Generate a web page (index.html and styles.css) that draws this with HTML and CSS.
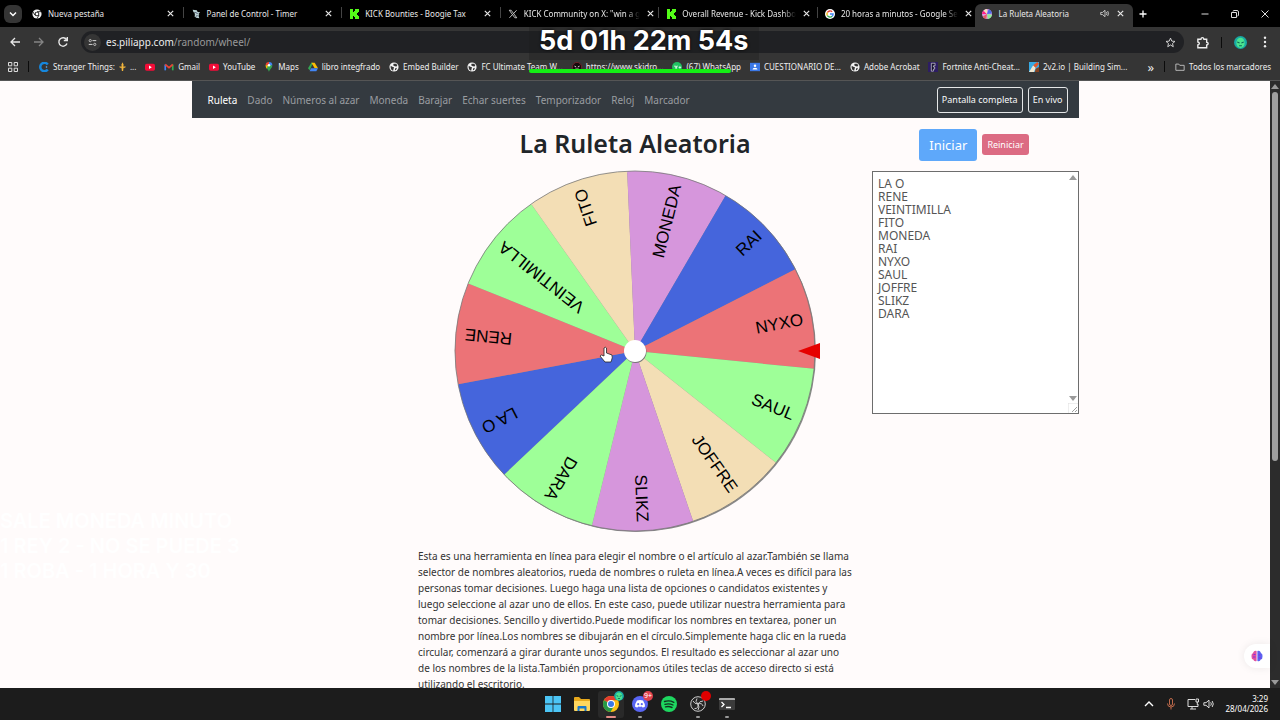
FILE: index.html
```html
<!DOCTYPE html>
<html lang="es">
<head>
    <meta charset="UTF-8">
    <meta name="viewport" content="width=device-width, initial-scale=1.0">
    <title>La Ruleta Aleatoria</title>
    <link rel="stylesheet" href="styles.css">
</head>
<body>
    <!-- shared icons -->
    <svg class="defs" aria-hidden="true">
        <symbol id="i-close" viewBox="0 0 10 10"><path d="M2 2l6 6M8 2l-6 6" fill="none" stroke="#e8e8e8" stroke-width="1.3"/></symbol>
        <symbol id="i-kick" viewBox="0 0 10 10"><path fill="#53fc18" d="M1 0h3v3h1V2h1V0h4v3H9v1H8v2h1v1h1v3H6V8H5V7H4v3H1z"/></symbol>
        <symbol id="i-globe" viewBox="0 0 12 12"><circle cx="6" cy="6" r="5.5" fill="#f4f4f4"/><path fill="#333" d="M2 4.500c1 0 1.500 1.500 3 1.500s1 1 .500 2l-.500 2.500C3 10 1.500 8 2 4.500zM5.500 2h3l1.500 2-1 1.500-2-.5-2-1zM7.500 7.500L9.500 7 8.500 9.500l-1.500.5z"/></symbol>
        <symbol id="i-youtube" viewBox="0 0 12 12"><rect x="0" y="2" width="12" height="8.500" rx="2" fill="#f20d38"/><path fill="#fff" d="M4.800 4.300v4l3.400-2z"/></symbol>
        <symbol id="i-avatar" viewBox="0 0 14 14"><circle cx="7" cy="7" r="7" fill="#18a9a4"/><ellipse cx="7" cy="7.500" rx="4.500" ry="5.500" fill="#4be38f"/><path d="M3.500 6.500l2.500 1M10.500 6.500L8 7.500M5.500 10.500h3" stroke="#0e6558" stroke-width="1.200"/></symbol>
        <symbol id="i-speaker" viewBox="0 0 14 12"><path d="M1 4.500h2.500L7 1.500v9l-3.500-3H1zM9 4q1.500 2 0 4M10.700 2.500q2.600 3.500 0 7" fill="none" stroke="#e4e4e4" stroke-width="1.100"/></symbol>
    </svg>

    <header class="browser">
        <div class="tab-strip">
            <button class="tab-search" aria-label="Buscar pestañas"><svg viewBox="0 0 10 10"><path d="M2 3.500l3 3 3-3" fill="none" stroke="#fff" stroke-width="1.500"/></svg></button>
            <div class="tabs">
                <div class="tab">
                    <svg class="icon" viewBox="0 0 12 12"><circle cx="6" cy="6" r="5.500" fill="#f3f3f3"/><circle cx="6" cy="6" r="2.800" fill="#111"/><circle cx="6" cy="6" r="1.700" fill="#fff"/><path d="M6 3.200h5M3.500 7.300L1.200 3.500M8.400 7.400L6 11.400" stroke="#111"/></svg>
                    <span class="tab-title">Nueva pestaña</span>
                    <button class="close" aria-label="Cerrar"><svg><use href="#i-close"/></svg></button>
                </div>
                <div class="tab">
                    <svg class="icon" viewBox="0 0 12 12"><path d="M2 1l5 .5 1 2 3 .5-2 2 1 1-1 1 1 3-4-.5-1-1.500H4l1-2-1-1 1-1.500-2-.5z" fill="#b9d2d4"/><path d="M5 4l3 1.500M6 8.500l2-.5" stroke="#446"/></svg>
                    <span class="tab-title">Panel de Control - Timer</span>
                    <button class="close" aria-label="Cerrar"><svg><use href="#i-close"/></svg></button>
                </div>
                <div class="tab">
                    <svg class="icon"><use href="#i-kick"/></svg>
                    <span class="tab-title">KICK Bounties - Boogie Tax</span>
                    <button class="close" aria-label="Cerrar"><svg><use href="#i-close"/></svg></button>
                </div>
                <div class="tab">
                    <svg class="icon" viewBox="0 0 12 12"><path d="M1.500 1.500h2.300l6.700 9H8.200zM10.300 1.500L6.600 5.600M5.300 6.800l-3.600 3.800" fill="none" stroke="#ddd"/></svg>
                    <span class="tab-title faded">KICK Community on X: "win a g</span>
                    <button class="close" aria-label="Cerrar"><svg><use href="#i-close"/></svg></button>
                </div>
                <div class="tab">
                    <svg class="icon"><use href="#i-kick"/></svg>
                    <span class="tab-title faded">Overall Revenue - Kick Dashbo</span>
                    <button class="close" aria-label="Cerrar"><svg><use href="#i-close"/></svg></button>
                </div>
                <div class="tab">
                    <svg class="icon" viewBox="0 0 12 12"><circle cx="6" cy="6" r="6" fill="#fff"/><g fill="none" stroke-width="1.700"><path d="M8.600 3.300A3.700 3.700 0 0 0 2.800 4.200" stroke="#ea4335"/><path d="M2.800 4.200a3.700 3.700 0 0 0 0 3.600" stroke="#fbbc05"/><path d="M2.800 7.800a3.700 3.700 0 0 0 5.800.9" stroke="#34a853"/><path d="M8.600 8.700A3.700 3.700 0 0 0 9.700 6H6" stroke="#4285f4"/></g></svg>
                    <span class="tab-title faded">20 horas a minutos - Google Se</span>
                    <button class="close" aria-label="Cerrar"><svg><use href="#i-close"/></svg></button>
                </div>
                <div class="tab active">
                    <svg class="icon" viewBox="0 0 12 12"><circle cx="6" cy="6" r="6" fill="#dc9be2"/><path fill="#f28" d="M6 6L0 6a6 6 0 0 1 2-4z"/><path fill="#4b6bea" d="M6 6l2-5.600a6 6 0 0 1 4 5z"/><path fill="#8df09a" d="M6 6l6 1a6 6 0 0 1-5 5z"/><path fill="#f5e2b8" d="M6 6L2 2a6 6 0 0 1 4-2z"/><path fill="#e45c65" d="M6 6l-1 6a6 6 0 0 1-4-3z"/></svg>
                    <span class="tab-title">La Ruleta Aleatoria</span>
                    <svg class="sound"><use href="#i-speaker"/></svg>
                    <button class="close" aria-label="Cerrar"><svg><use href="#i-close"/></svg></button>
                </div>
            </div>
            <button class="new-tab" aria-label="Nueva pestaña"><svg viewBox="0 0 10 10"><path d="M5 1.500v7M1.500 5h7" stroke="#fff" stroke-width="1.300"/></svg></button>
            <div class="window-buttons">
                <button aria-label="Minimizar"><svg viewBox="0 0 10 10"><path d="M1.500 5h7" stroke="#ddd"/></svg></button>
                <button aria-label="Restaurar"><svg viewBox="0 0 10 10"><path d="M3 2.500q0-1 1-1h3q1.500 0 1.500 1.500v3q0 1-1 1M1.500 3.500h5v5h-5z" fill="none" stroke="#ddd"/></svg></button>
                <button aria-label="Cerrar ventana"><svg viewBox="0 0 10 10"><path d="M1.500 1.500l7 7M8.500 1.500l-7 7" stroke="#ddd"/></svg></button>
            </div>
        </div>

        <div class="toolbar">
            <button aria-label="Atrás"><svg viewBox="0 0 12 12"><path d="M11 6H2M6 2L2 6l4 4" fill="none" stroke="#e8e8e8" stroke-width="1.300"/></svg></button>
            <button aria-label="Adelante"><svg viewBox="0 0 12 12"><path d="M1 6h9M6 2l4 4-4 4" fill="none" stroke="#848484" stroke-width="1.300"/></svg></button>
            <button aria-label="Recargar"><svg viewBox="0 0 12 12"><path d="M10 7.500A4.200 4.200 0 1 1 9.500 3.500M10.300 1v3.500H6.800" fill="none" stroke="#e8e8e8" stroke-width="1.400"/></svg></button>
            <div class="address">
                <span class="site-info"><svg viewBox="0 0 12 12"><path d="M6 3.500h5M1 8.500h5" stroke="#ddd" stroke-width="1.300"/><circle cx="3" cy="3.500" r="1.500" fill="none" stroke="#ddd"/><circle cx="9" cy="8.500" r="1.500" fill="none" stroke="#ddd"/></svg></span>
                <span class="url">es.piliapp.com<span class="path">/random/wheel/</span></span>
                <svg class="star" viewBox="0 0 12 12"><path d="M6 1.200l1.400 3.300 3.500.3-2.700 2.300.8 3.500-3-1.900-3 1.900.8-3.500L1.100 4.800l3.500-.3z" fill="none" stroke="#ddd"/></svg>
            </div>
            <button class="extensions" aria-label="Extensiones"><svg viewBox="0 0 14 14"><path d="M2 3.500h3.300q.2-1.800 1.600-1.800t1.600 1.800H11.500v3.200q1.600.2 1.600 1.500t-1.600 1.500v3H2V9.500q1.600-.3 1.600-1.500T2 6.500z" fill="none" stroke="#eee" stroke-width="1.500"/></svg></button>
            <span class="divider"></span>
            <button class="profile" aria-label="Perfil"><svg><use href="#i-avatar"/></svg></button>
            <button aria-label="Menú"><svg viewBox="0 0 12 12"><g fill="#eee"><circle cx="6" cy="1.800" r="1.200"/><circle cx="6" cy="6" r="1.200"/><circle cx="6" cy="10.200" r="1.200"/></g></svg></button>
        </div>

        <nav class="bookmarks">
            <svg class="icon" viewBox="0 0 10 10"><path d="M.5.500h3.300v3.300H.5zM6.200.500h3.300v3.300H6.200zM.5 6.200h3.300v3.300H.5zM6.200 6.200h3.300v3.300H6.200z" fill="none" stroke="#ddd"/></svg>
            <span class="divider"></span>
            <div class="bookmark-list">
                <a href="#"><svg class="icon" viewBox="0 0 12 12"><path d="M10.500 3A5 5 0 1 0 10.500 9" fill="none" stroke="#1687dd" stroke-width="3"/><circle cx="9" cy="6" r="1" fill="#68b8ff"/></svg>Stranger Things: <svg class="lis" viewBox="0 0 8 10"><path fill="#f3b63c" d="M4 0l1.300 3L4.800 5h3L7 6.500H5.200l-.5 3.500H3.300l-.5-3.500H1L.2 5h3L2.700 3z"/></svg>...</a>
                <a href="#" aria-label="YouTube"><svg class="icon"><use href="#i-youtube"/></svg></a>
                <a href="#"><svg class="icon" viewBox="0 0 12 12"><path d="M1.500 10V3" stroke="#4285f4" stroke-width="2"/><path d="M10.500 10V3" stroke="#34a853" stroke-width="2"/><path d="M1.500 3L6 6.800 10.500 3" fill="none" stroke="#ea4335" stroke-width="2"/></svg>Gmail</a>
                <a href="#"><svg class="icon"><use href="#i-youtube"/></svg>YouTube</a>
                <a href="#"><svg class="icon" viewBox="0 0 12 12"><path fill="#34a853" d="M6 12C5.500 9 2 7.500 2 4h8c0 3.500-3.500 5-4 8z"/><path fill="#4285f4" d="M6 0a4 4 0 0 1 4 4H6z"/><path fill="#ea4335" d="M6 0a4 4 0 0 0-4 4h4z"/><path fill="#fbbc04" d="M2 4h3L3.300 8C2.500 7 2 6 2 4z"/><circle cx="6" cy="4" r="1.500" fill="#fff"/></svg>Maps</a>
                <a href="#"><svg class="icon" viewBox="0 0 12 12"><path fill="#34a853" d="M4 1h2l-4 9-2-2.500z"/><path fill="#fbbc04" d="M4 1h4l4 6.500H8z"/><path fill="#4285f4" d="M3.500 7.500H12L10 11H2z"/></svg>libro integfrado</a>
                <a href="#"><svg class="icon"><use href="#i-globe"/></svg>Embed Builder</a>
                <a href="#"><svg class="icon"><use href="#i-globe"/></svg>FC Ultimate Team W...</a>
                <a href="#"><svg class="icon" viewBox="0 0 12 12"><circle cx="6" cy="6" r="5.500" fill="#140a0c" stroke="#7b1f2c"/><path d="M3 5l2 1M9 5L7 6M4 8.500h4" stroke="#fff"/></svg>https://www.skidro...</a>
                <a href="#"><svg class="icon" viewBox="0 0 12 12"><circle cx="6" cy="6" r="6" fill="#21c063"/><path d="M2.500 5h2v3M7 5H5.500v3M8 6.500h3M9.500 5v3" fill="none" stroke="#eafff0"/></svg>(67) WhatsApp</a>
                <a href="#"><svg class="icon" viewBox="0 0 12 12"><rect y="1" width="12" height="10" fill="#3b78e7"/><circle cx="6" cy="4.500" r="1.500" fill="#fff"/><path fill="#fff" d="M3 9q0-2 3-2t3 2z"/></svg>CUESTIONARIO DE...</a>
                <a href="#"><svg class="icon"><use href="#i-globe"/></svg>Adobe Acrobat</a>
                <a href="#"><svg class="icon" viewBox="0 0 12 12"><rect width="12" height="12" fill="#2d1d63"/><path d="M4 11V1.500h4.500v3H6.500V6H8v2.500H6.500V11z" fill="#151030" stroke="#ddd" stroke-width=".8"/></svg>Fortnite Anti-Cheat...</a>
                <a href="#"><svg class="icon" viewBox="0 0 12 12"><rect width="12" height="12" fill="#38a9e2"/><path fill="#efe5cf" d="M0 12L5 4l3 3-2 5z"/><path fill="#e6572b" d="M5 4l5-4 2 2-4 5z"/><path fill="#834121" d="M8 8l4-2v6H7z"/></svg>2v2.io | Building Sim...</a>
            </div>
            <span class="more">»</span>
            <span class="divider"></span>
            <a href="#"><svg class="icon" viewBox="0 0 12 12"><path d="M1 2.500h3.500l1.200 1.500H11v6H1z" fill="none" stroke="#ccc"/></svg>Todos los marcadores</a>
        </nav>

        <div class="timer">5d 01h 22m 54s</div>
    </header>

    <div class="viewport">
        <div class="page">
            <nav class="navbar">
                <a href="#" class="current">Ruleta</a>
                <a href="#">Dado</a>
                <a href="#">Números al azar</a>
                <a href="#">Moneda</a>
                <a href="#">Barajar</a>
                <a href="#">Echar suertes</a>
                <a href="#">Temporizador</a>
                <a href="#">Reloj</a>
                <a href="#">Marcador</a>
                <div class="nav-buttons">
                    <button>Pantalla completa</button>
                    <button>En vivo</button>
                </div>
            </nav>
            <div class="columns">
                <main class="main">
                    <h1>La Ruleta Aleatoria</h1>
                    <svg class="wheel" id="wheel" viewBox="-180 -180 360 360" role="img" aria-label="Ruleta"></svg>
                    <p>Esta es una herramienta en línea para elegir el nombre o el artículo al azar.También se llama selector de nombres aleatorios, rueda de nombres o ruleta en línea.A veces es difícil para las personas tomar decisiones. Luego haga una lista de opciones o candidatos existentes y luego seleccione al azar uno de ellos. En este caso, puede utilizar nuestra herramienta para tomar decisiones. Sencillo y divertido.Puede modificar los nombres en textarea, poner un nombre por línea.Los nombres se dibujarán en el círculo.Simplemente haga clic en la rueda circular, comenzará a girar durante unos segundos. El resultado es seleccionar al azar uno de los nombres de la lista.También proporcionamos útiles teclas de acceso directo si está utilizando el escritorio.</p>
                </main>
                <aside class="side">
                    <div class="actions">
                        <button class="start">Iniciar</button>
                        <button class="reset">Reiniciar</button>
                    </div>
                    <div class="names-box">
                        <textarea id="names" aria-label="Nombres" spellcheck="false">LA O
RENE
VEINTIMILLA
FITO
MONEDA
RAI
NYXO
SAUL
JOFFRE
SLIKZ
DARA</textarea>
                        <span class="arrow up"></span>
                        <span class="arrow down"></span>
                        <svg class="grip" viewBox="0 0 10 10"><path d="M0 10V0h10" fill="none" stroke="#ddd"/><path d="M4 9l5-5M7 9l2-2" stroke="#888" stroke-width=".8"/></svg>
                    </div>
                </aside>
            </div>
        </div>
        <div class="scrollbar">
            <span class="tri up"></span>
            <span class="track"><span class="thumb"></span></span>
            <span class="tri down"></span>
        </div>
        <div class="caption">SALE MONEDA MINUTO<br>1 REY 2 - NO SE PUEDE 3<br>1 ROBA - 1 HORA Y 30</div>
        <div class="assistant"><svg viewBox="0 0 12 12"><path fill="#e0529f" d="M5.600 1v10Q3 12 2.300 9.500.3 9 .5 6.500 0 4 2 3 3 .3 5.600 1z"/><path fill="#5a63f0" d="M6.400 1v10q2.600 1 3.300-1.500 2-.5 1.800-3Q12 4 10 3 9 .3 6.400 1z"/><path d="M2.500 4.500h2M2 7h2.500M7.500 5h2M7.500 8H10" stroke="#8b2ce0"/></svg></div>
    </div>

    <footer class="taskbar">
        <div class="apps">
            <button aria-label="Inicio"><svg viewBox="0 0 16 16"><path fill="#4cc5f5" d="M0 0h7.600v7.600H0zM8.400 0H16v7.600H8.400zM0 8.400h7.600V16H0zM8.400 8.400H16V16H8.400z"/></svg></button>
            <button aria-label="Explorador"><svg viewBox="0 0 16 16"><path fill="#e8a91c" d="M0 2q0-1 1-1h4l2 2h8q1 0 1 1v4H0z"/><path fill="#ffd75e" d="M0 5h16v9q0 1-1 1H1q-1 0-1-1z"/><path fill="#1877c9" d="M3.500 15v-4q0-1 1-1h7q1 0 1 1v4h-2v-2.500h-5V15z"/></svg></button>
            <button class="open focused" aria-label="Chrome"><svg viewBox="0 0 16 16"><circle cx="8" cy="8" r="8" fill="#fbc116"/><path fill="#e33b2e" d="M8 8L1 4.200A8 8 0 0 1 15 4.200H8z"/><path fill="#279847" d="M1 4.200A8 8 0 0 0 7.500 16L11 10z"/><circle cx="8" cy="8" r="4" fill="#fff"/><circle cx="8" cy="8" r="3" fill="#3b78e7"/></svg><svg class="badge"><use href="#i-avatar"/></svg></button>
            <button class="open" aria-label="Discord"><svg viewBox="0 0 16 16"><circle cx="8" cy="8" r="8" fill="#5865f2"/><path fill="#fff" d="M5 4.500q3-1 6 0 2 3 2 6-1 1-2.500 1l-.7-1q-1.800.4-3.600 0l-.7 1Q4 11.500 3 10.500q0-3 2-6z"/><circle cx="6.200" cy="8.200" r="1.100" fill="#5865f2"/><circle cx="9.800" cy="8.200" r="1.100" fill="#5865f2"/></svg><span class="badge count">9+</span></button>
            <button aria-label="Spotify"><svg viewBox="0 0 16 16"><circle cx="8" cy="8" r="8" fill="#1ed760"/><path d="M3.500 5.500q5-1.500 9.300.8M4 8.300q4.300-1.200 8 .7M4.500 10.900q3.500-.9 6.500.6" fill="none" stroke="#12351f" stroke-width="1.400" stroke-linecap="round"/></svg></button>
            <button class="open" aria-label="OBS"><svg viewBox="0 0 16 16"><circle cx="8" cy="8" r="7.300" fill="#252525" stroke="#ccc"/><path d="M7 2.500q-2.500 3 1 5.500M13 10q-1-3.500-5-2M4.500 12.500q4 .5 3.500-4.500M3 5q1.500 3 5 3M13 5q-3.500 0-5 3M8 14q2-3 0-6" fill="none" stroke="#ccc"/></svg><span class="badge rec"></span></button>
            <button class="open" aria-label="Terminal"><svg viewBox="0 0 16 16"><rect y="2" width="16" height="12" rx="1" fill="#3b3b3b"/><path fill="#aaa" d="M0 3q0-1 1-1h14q1 0 1 1v1H0z"/><path d="M2.500 6l2.500 2.500L2.500 11M7 11.500h5" fill="none" stroke="#fff" stroke-width="1.300"/></svg></button>
        </div>
        <div class="tray">
            <svg viewBox="0 0 12 12"><path d="M2 8l4-4 4 4" fill="none" stroke="#fff" stroke-width="1.400"/></svg>
            <svg class="mic" viewBox="0 0 12 12"><path d="M4.500 2q0-1.500 1.500-1.500T7.500 2v4Q7.500 7.500 6 7.500T4.500 6zM2.500 5.500Q2.500 9 6 9t3.500-3.500M6 9v2.500" fill="none" stroke="#bf6a4b"/></svg>
            <svg viewBox="0 0 12 12"><path d="M8 1.500H1v7h10V6M3 11h6M5 8.500V11M9 1h2.500v3H9zM10.300 4v3" fill="none" stroke="#ddd"/></svg>
            <svg class="volume"><use href="#i-speaker"/></svg>
            <div class="clock">3:29<br>28/04/2026</div>
        </div>
    </footer>

    <script src="script.js"></script>
</body>
</html>
```

FILE: styles.css
```css
* {
    box-sizing: border-box;
}

body {
    margin: 0;
    height: 100vh;
    display: flex;
    flex-direction: column;
    overflow: hidden;
    font-family: "Noto Sans", "Open Sans", sans-serif;
    background-color: #fffbfb;
}

button {
    font-family: inherit;
    padding: 0;
    border: none;
    background: none;
    cursor: pointer;
}

a {
    text-decoration: none;
}

svg {
    display: block;
    flex: none;
}

.defs {
    position: absolute;
    width: 0;
    height: 0;
}

.icon {
    width: 10px;
    height: 10px;
}

.divider {
    width: 1px;
    height: 11px;
    background-color: #0b0b0b;
}

/* browser window */
.browser {
    position: relative;
    background-color: #353535;
    border-bottom: 1px solid #555;
    color: #e8e8e8;
}

.tab-strip {
    display: flex;
    align-items: center;
    height: 27px;
    background-color: #000;
}

.tab-search {
    flex: none;
    width: 18px;
    height: 18px;
    margin: 0 3px 0 4px;
    padding: 4px;
    border-radius: 6px;
    background-color: #353535;
}

.tab-search svg,
.new-tab svg,
.window-buttons svg {
    width: 10px;
    height: 10px;
}

.tabs {
    flex: 1;
    min-width: 0;
    display: flex;
    align-self: stretch;
}

.tab {
    flex: 1 1 0;
    min-width: 0;
    display: flex;
    align-items: center;
    gap: 6px;
    margin-top: 4px;
    padding: 0 8px 4px 7px;
    font-size: 8px;
    line-height: 12px;
}

.tab + .tab:not(.active) {
    border-left: 1px solid transparent;
    border-image: linear-gradient(transparent 4px, #444 4px, #444 14px, transparent 14px) 1;
}

.tab.active {
    background-color: #353535;
    border-radius: 6px 6px 0 0;
}

.tab-title {
    flex: 1;
    white-space: nowrap;
}

.faded {
    mask-image: linear-gradient(to right, #000 88%, transparent);
}

.close svg {
    width: 9px;
    height: 9px;
}

.sound {
    width: 10px;
    height: 9px;
}

.new-tab {
    flex: none;
    margin-left: 5px;
}

.window-buttons {
    display: flex;
    gap: 20px;
    margin: 0 10px 0 52px;
}

.toolbar {
    display: flex;
    align-items: center;
    gap: 12px;
    height: 30px;
    padding: 0 9px;
}

.toolbar button svg {
    width: 12px;
    height: 12px;
}

.toolbar .profile svg,
.toolbar .extensions svg {
    width: 13px;
    height: 13px;
}

.address {
    flex: 1;
    display: flex;
    align-items: center;
    height: 22px;
    padding: 0 8px 0 3px;
    border-radius: 11px;
    background-color: #202124;
    font-size: 10px;
    color: #eee;
}

.site-info {
    padding: 4px;
    margin-right: 5px;
    border-radius: 50%;
    background-color: #353535;
}

.site-info svg {
    width: 9px;
    height: 9px;
}

.url {
    flex: 1;
}

.path {
    color: #999;
}

.star {
    width: 11px;
    height: 11px;
}

.bookmarks {
    display: flex;
    align-items: center;
    gap: 10px;
    height: 23px;
    padding: 0 9px 4px 8px;
    font-size: 8px;
    white-space: nowrap;
}

.bookmark-list {
    flex: 1;
    display: flex;
    justify-content: space-between;
    margin-right: 10px;
}

.bookmarks a {
    display: flex;
    align-items: center;
    gap: 4px;
    color: #eee;
}

.lis {
    width: 7px;
    height: 9px;
}

.more {
    font-size: 13px;
    line-height: 12px;
}

.timer {
    position: absolute;
    top: 27px;
    left: 529px;
    padding: 0 11px 5px 10px;
    background-color: rgba(30, 30, 30, 0.35);
    font: 700 27px/28px Inter, sans-serif;
    color: #fff;
    text-shadow: 0 0 3px #000;
}

.timer::after {
    content: "";
    position: absolute;
    left: 0;
    top: 42px;
    width: 202px;
    height: 4px;
    border-radius: 2px;
    background-color: #14ee14;
}

/* page */
.viewport {
    flex: 1;
    min-height: 0;
    position: relative;
    display: flex;
}

.page {
    flex: 1;
    overflow: hidden;
}

.navbar {
    display: flex;
    align-items: center;
    gap: 10px;
    max-width: 887px;
    height: 37px;
    margin: 0 auto;
    padding: 0 11px 0 16px;
    background-color: #343a40;
    font-size: 10px;
}

.navbar a {
    color: #9a9da0;
}

.navbar .current {
    color: #fff;
}

.nav-buttons {
    display: flex;
    gap: 5px;
    margin-left: auto;
}

.nav-buttons button {
    height: 26px;
    padding: 0 4px;
    border: 1px solid #e5e7e8;
    border-radius: 3px;
    font-size: 9px;
    color: #f8f9fa;
}

.columns {
    display: flex;
    justify-content: flex-end;
    gap: 20px;
    max-width: 888px;
    margin: 0 auto;
}

.main {
    width: 434px;
    display: flex;
    flex-direction: column;
    align-items: center;
}

h1 {
    margin: 9px 0 11px;
    font-size: 25px;
    line-height: 33px;
    font-weight: 600;
    color: #212529;
}

.wheel {
    width: 360px;
    height: 360px;
    overflow: visible;
}

.wheel text {
    font-family: "Liberation Sans", Arial, sans-serif;
    font-size: 17px;
    text-anchor: end;
    dominant-baseline: central;
}

.main p {
    width: 100%;
    margin: 17px 0 0;
    font-size: 10px;
    line-height: 16px;
    color: #333;
}

.side {
    width: 207px;
}

.actions {
    display: flex;
    justify-content: center;
    align-items: center;
    gap: 5px;
    height: 53px;
    padding-right: 3px;
}

.start,
.reset {
    border-radius: 3px;
    color: #fff;
}

.start {
    padding: 7px 10px;
    background-color: #5ea8fa;
    font-size: 13px;
    line-height: 18px;
}

.reset {
    padding: 4px 5px;
    background-color: #dc6b83;
    font-size: 9px;
    line-height: 13px;
}

.names-box {
    position: relative;
}

textarea {
    display: block;
    width: 100%;
    height: 243px;
    padding: 5px;
    border: 1px solid #6d6d6d;
    resize: none;
    overflow: hidden;
    background-color: #fff;
    font-family: inherit;
    font-size: 12px;
    line-height: 13px;
    color: #555;
}

.arrow,
.tri {
    border: 4px solid transparent;
}

.arrow {
    position: absolute;
    right: 2px;
}

.up {
    border-top: none;
    border-bottom: 5px solid #9a9a9a;
}

.down {
    border-bottom: none;
    border-top: 5px solid #9a9a9a;
}

.arrow.up {
    top: 4px;
}

.arrow.down {
    bottom: 13px;
}

.grip {
    position: absolute;
    right: 1px;
    bottom: 1px;
    width: 10px;
    height: 10px;
}

.scrollbar {
    width: 10px;
    display: flex;
    flex-direction: column;
    align-items: center;
    gap: 3px;
    padding: 3px 0;
    background-color: #2c2c2c;
}

.track {
    flex: 1;
}

.thumb {
    display: block;
    width: 6px;
    height: 63%;
    border-radius: 3px;
    background-color: #9f9f9f;
}

.caption {
    position: absolute;
    left: 0;
    bottom: 104px;
    font: 600 20px/25px Inter, sans-serif;
    color: #fff;
}

.assistant {
    position: absolute;
    right: 10px;
    bottom: 20px;
    padding: 6px 7px;
    border-radius: 12px 0 0 12px;
    background-color: #fff;
    box-shadow: 0 0 8px rgba(0, 0, 0, 0.08);
}

.assistant svg {
    width: 12px;
    height: 12px;
}

/* desktop taskbar */
.taskbar {
    display: grid;
    grid-template-columns: 1fr auto 1fr;
    align-items: center;
    height: 32px;
    background-color: #1c1c1c;
}

.apps {
    grid-column: 2;
    display: flex;
    gap: 3px;
}

.apps button {
    position: relative;
    width: 26px;
    height: 27px;
    padding: 0 5px 1px;
    border-radius: 3px;
}

.apps svg {
    width: 16px;
    height: 16px;
}

.apps .focused {
    background-color: #292929;
}

.open::after {
    content: "";
    position: absolute;
    left: 11px;
    bottom: 0;
    width: 4px;
    height: 2px;
    border-radius: 1px;
    background-color: #999;
}

.focused::after {
    left: 8px;
    width: 10px;
    background-color: #e58c86;
}

.apps .badge {
    position: absolute;
    top: 0;
    right: 0;
    width: 10px;
    height: 10px;
    border-radius: 50%;
}

.count {
    background-color: #e0414d;
    font-size: 7px;
    line-height: 10px;
    color: #fff;
}

.rec {
    background-color: #e00000;
}

.tray {
    display: flex;
    justify-content: flex-end;
    align-items: center;
    gap: 10px;
    padding-right: 12px;
}

.tray svg {
    width: 12px;
    height: 12px;
}

.tray .volume {
    margin-left: -6px;
}

.clock {
    font-size: 8px;
    line-height: 10px;
    text-align: right;
    color: #fff;
}
```

FILE: script.js
```js
const colors = {
    blue: '#4565dc',
    red: '#ec7377',
    green: '#9eff98',
    wheat: '#f3deb5',
    plum: '#d696dc'
};
const order = ['blue', 'red', 'green', 'wheat', 'plum'];
const radius = 180;
const startAngle = 136.6;

const wheel = document.getElementById('wheel');
const names = document.getElementById('names').value.split('\n');

function add(tag, attrs, text) {
    const el = document.createElementNS('http://www.w3.org/2000/svg', tag);
    for (const key in attrs) {
        el.setAttribute(key, attrs[key]);
    }
    if (text) {
        el.textContent = text;
    }
    wheel.appendChild(el);
}

function point(angle) {
    const rad = angle * Math.PI / 180;
    return (radius * Math.cos(rad)).toFixed(2) + ' ' + (radius * Math.sin(rad)).toFixed(2);
}

function drawWheel() {
    const step = 360 / names.length;

    // shadow behind the disc
    add('circle', { cx: 1, cy: 1, r: radius, fill: '#888' });

    names.forEach((name, i) => {
        const from = startAngle + i * step;
        // the last slice must not repeat the first colour
        const color = i === names.length - 1 ? 'green' : order[i % order.length];
        add('path', {
            d: `M0 0L${point(from)}A${radius} ${radius} 0 0 1 ${point(from + step)}Z`,
            fill: colors[color]
        });
    });

    names.forEach((name, i) => {
        const middle = startAngle + (i + 0.5) * step;
        add('text', { x: radius - 9, y: 0, transform: `rotate(${middle})` }, name);
    });

    add('circle', { cx: 0, cy: 0, r: radius, fill: 'none', stroke: '#777', 'stroke-width': 0.8 });
    add('circle', { cx: 0.5, cy: 1, r: 11, fill: '#777' });
    add('circle', { cx: 0, cy: 0, r: 11, fill: '#fff' });
    add('path', { d: 'M163 0L185 -8V8Z', fill: '#e60000' });

    // hand cursor
    add('path', {
        d: 'M-31 -3Q-29.500 -4.500 -28.500 -3V2L-23 4Q-22 6 -24 11H-30L-35 5Q-34 3 -31 5Z',
        fill: '#fff',
        stroke: '#222',
        'stroke-width': 0.8
    });
}

drawWheel();
```
